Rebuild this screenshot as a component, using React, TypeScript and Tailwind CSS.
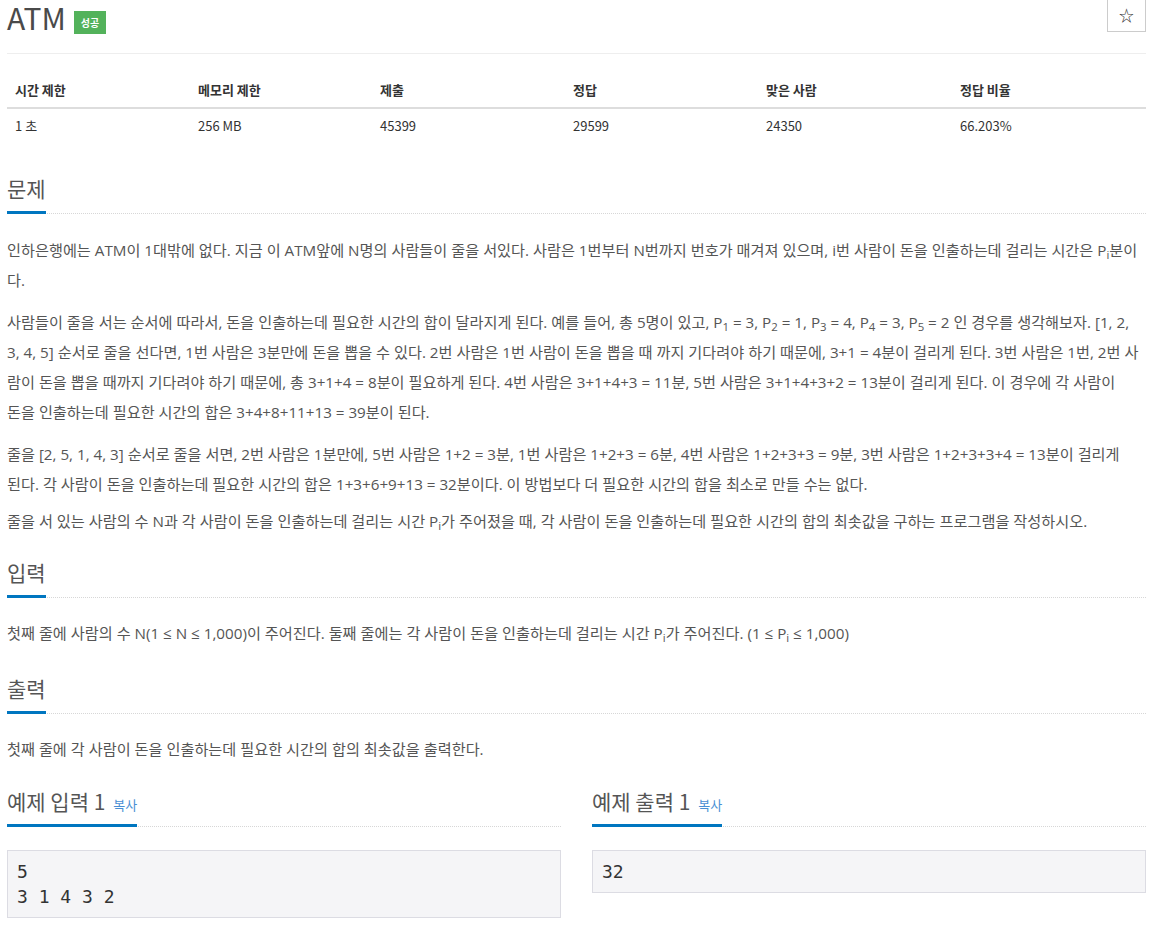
import React from "react";

const font = { fontFamily: '"Noto Sans CJK KR", "Noto Sans", sans-serif' };
const bodyFont = { fontFamily: '"Open Sans", "Noto Sans CJK KR", sans-serif' };

function Headline({ children, className = "" }: { children: React.ReactNode; className?: string }) {
  return (
    <div className={"border-b border-dotted border-[#d7d7d7] " + className}>
      <h2 className="inline-block -mb-px border-b-[3px] border-[#0076c0] pb-[9px] text-[21px] leading-[28px] text-[#555]">
        {children}
      </h2>
    </div>
  );
}

export default function App() {
  const heads = ["시간 제한", "메모리 제한", "제출", "정답", "맞은 사람", "정답 비율"];
  const vals = ["1 초", "256 MB", "45399", "29599", "24350", "66.203%"];
  return (
    <div style={font} className="w-[1169px] min-h-[933px] bg-white text-[#555]">
      <div className="ml-[7px] w-[1139px]">
        <div className="flex items-start justify-between border-b border-[#eee] h-[54px]">
          <div className="flex items-start">
            <span className="text-[30px] leading-[34px] text-[#4a4a4a]">ATM</span>
            <span className="ml-[8px] mt-[11px] h-[23px] bg-[#53b25b] px-[7px] text-[10px] leading-[23px] font-bold text-white">성공</span>
          </div>
          <button className="w-[39px] h-[33px] -mt-px border border-[#ccc] bg-white text-[15px] text-[#333] flex items-center justify-center">☆</button>
        </div>

        <div className="mt-[19px] text-[13px] text-[#333]">
          <div className="grid grid-cols-[183px_182px_193px_193px_194px_1fr] border-b-2 border-[#ddd]">
            {heads.map((h) => (
              <div key={h} className="px-[8px] py-[8px] leading-[18px] font-bold">{h}</div>
            ))}
          </div>
          <div className="grid grid-cols-[183px_182px_193px_193px_194px_1fr]">
            {vals.map((v) => (
              <div key={v} className="px-[8px] py-[8px] leading-[18px]">{v}</div>
            ))}
          </div>
        </div>

        <Headline className="mt-[31px]">문제</Headline>
        <div style={bodyFont} className="mt-[21px] text-[15.2px] leading-[30px] text-[#555]">
          <p className="mb-[12px]">
            인하은행에는 ATM이 1대밖에 없다. 지금 이 ATM앞에 N명의 사람들이 줄을 서있다. 사람은 1번부터 N번까지 번호가 매겨져 있으며, i번 사람이 돈을 인출하는데 걸리는 시간은 P<sub>i</sub>분이
            <br />
            다.
          </p>
          <p className="mb-[12px]">
            사람들이 줄을 서는 순서에 따라서, 돈을 인출하는데 필요한 시간의 합이 달라지게 된다. 예를 들어, 총 5명이 있고, P<sub>1</sub> = 3, P<sub>2</sub> = 1, P<sub>3</sub> = 4, P<sub>4</sub> = 3, P<sub>5</sub> = 2 인 경우를 생각해보자. [1, 2,
            <br />
            3, 4, 5] 순서로 줄을 선다면, 1번 사람은 3분만에 돈을 뽑을 수 있다. 2번 사람은 1번 사람이 돈을 뽑을 때 까지 기다려야 하기 때문에, 3+1 = 4분이 걸리게 된다. 3번 사람은 1번, 2번 사
            <br />
            람이 돈을 뽑을 때까지 기다려야 하기 때문에, 총 3+1+4 = 8분이 필요하게 된다. 4번 사람은 3+1+4+3 = 11분, 5번 사람은 3+1+4+3+2 = 13분이 걸리게 된다. 이 경우에 각 사람이
            <br />
            돈을 인출하는데 필요한 시간의 합은 3+4+8+11+13 = 39분이 된다.
          </p>
          <p className="mb-[7px]">
            줄을 [2, 5, 1, 4, 3] 순서로 줄을 서면, 2번 사람은 1분만에, 5번 사람은 1+2 = 3분, 1번 사람은 1+2+3 = 6분, 4번 사람은 1+2+3+3 = 9분, 3번 사람은 1+2+3+3+4 = 13분이 걸리게
            <br />
            된다. 각 사람이 돈을 인출하는데 필요한 시간의 합은 1+3+6+9+13 = 32분이다. 이 방법보다 더 필요한 시간의 합을 최소로 만들 수는 없다.
          </p>
          <p>
            줄을 서 있는 사람의 수 N과 각 사람이 돈을 인출하는데 걸리는 시간 P<sub>i</sub>가 주어졌을 때, 각 사람이 돈을 인출하는데 필요한 시간의 합의 최솟값을 구하는 프로그램을 작성하시오.
          </p>
        </div>

        <Headline className="mt-[22px]">입력</Headline>
        <div style={bodyFont} className="mt-[20px] text-[15.2px] leading-[30px] text-[#555]">
          <p>
            첫째 줄에 사람의 수 N(1 ≤ N ≤ 1,000)이 주어진다. 둘째 줄에는 각 사람이 돈을 인출하는데 걸리는 시간 P<sub>i</sub>가 주어진다. (1 ≤ P<sub>i</sub> ≤ 1,000)
          </p>
        </div>

        <Headline className="mt-[26px]">출력</Headline>
        <div style={bodyFont} className="mt-[20px] text-[15.2px] leading-[30px] text-[#555]">
          <p>첫째 줄에 각 사람이 돈을 인출하는데 필요한 시간의 합의 최솟값을 출력한다.</p>
        </div>

        <div className="mt-[23px] grid grid-cols-2 gap-[31px]">
          {[
            { t: "예제 입력 1", c: "5\n3 1 4 3 2" },
            { t: "예제 출력 1", c: "32" },
          ].map((s) => (
            <div key={s.t}>
              <div className="border-b border-dotted border-[#d7d7d7]">
                <h2 className="inline-block -mb-px border-b-[3px] border-[#0076c0] pb-[9px] text-[21px] leading-[28px] text-[#555]">
                  {s.t}
                  <span className="ml-[8px] text-[13px] leading-none text-[#4a8fd4]">복사</span>
                </h2>
              </div>
              <pre
                style={{ fontFamily: '"DejaVu Sans Mono", monospace' }}
                className="mt-[23px] border border-[#dcdce3] bg-[#f5f5f7] px-[9px] py-[8px] text-[18px] leading-[25px] text-[#333]"
              >
                {s.c}
              </pre>
            </div>
          ))}
        </div>
      </div>
    </div>
  );
}
